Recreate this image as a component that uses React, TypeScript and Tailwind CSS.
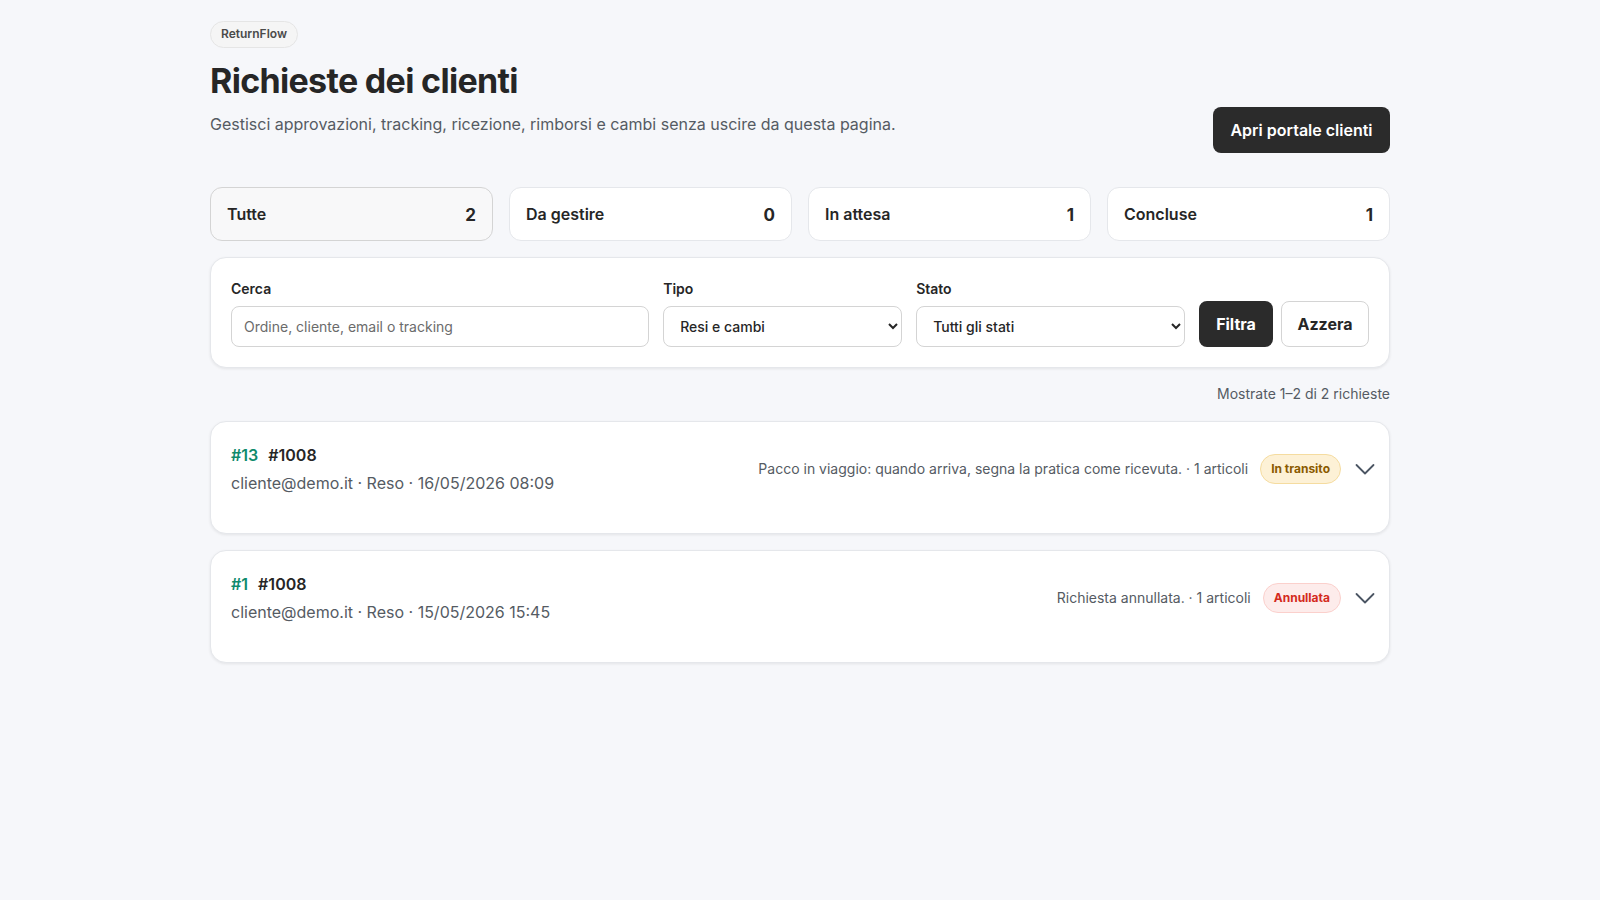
import React from 'react';

const tabs = [
  { id: 'all', label: 'Tutte', count: 2 },
  { id: 'todo', label: 'Da gestire', count: 0 },
  { id: 'waiting', label: 'In attesa', count: 1 },
  { id: 'done', label: 'Concluse', count: 1 },
];

const requests = [
  {
    id: '#13',
    order: '#1008',
    meta: 'cliente@demo.it · Reso · 16/05/2026 08:09',
    note: 'Pacco in viaggio: quando arriva, segna la pratica come ricevuta. · 1 articoli',
    status: 'In transito',
    tone: 'amber',
  },
  {
    id: '#1',
    order: '#1008',
    meta: 'cliente@demo.it · Reso · 15/05/2026 15:45',
    note: 'Richiesta annullata. · 1 articoli',
    status: 'Annullata',
    tone: 'red',
  },
];

function Chevron() {
  return (
    <svg width="20" height="20" viewBox="0 0 20 20" fill="none" className="text-[#4b5563]">
      <path d="M1.5 6L10 14.5L18.5 6" stroke="currentColor" strokeWidth="1.8" strokeLinecap="round" strokeLinejoin="round" />
    </svg>
  );
}

export default function App() {
  return (
    <div className="min-h-screen bg-[#f6f7fa] text-[#262626] font-['Inter','Noto_Sans',sans-serif]">
      <div className="mx-auto w-[1180px] pt-5 pb-16">
        {/* Header */}
        <div className="flex items-start justify-between">
          <div>
            <span className="inline-flex h-[27px] items-center rounded-full border border-[#e5e5e5] bg-[#f5f5f5] px-2.5 text-xs font-semibold text-[#4a4a4a]">
              ReturnFlow
            </span>
            <h1 className="mt-[11px] text-[34px] font-bold leading-[44px] tracking-[-0.02em] text-[#262626]">
              Richieste dei clienti
            </h1>
            <p className="mt-[9px] text-base text-[#555b63]">
              Gestisci approvazioni, tracking, ricezione, rimborsi e cambi senza uscire da questa pagina.
            </p>
          </div>
          <button className="mt-[87px] h-[46px] w-[177px] rounded-lg bg-[#2b2b2b] text-base font-semibold text-white">
            Apri portale clienti
          </button>
        </div>

        {/* Tabs */}
        <div className="mt-[34px] grid grid-cols-4 gap-4">
          {tabs.map((t, i) => (
            <button
              key={t.id}
              className={`flex h-[54px] items-center justify-between rounded-xl border px-4 text-base font-semibold text-[#262626] ${
                i === 0 ? 'border-[#d4d4d4] bg-[#f8f8f9]' : 'border-[#e5e7eb] bg-white'
              }`}
            >
              <span className="leading-none">{t.label}</span>
              <span className="translate-y-[1px] text-[17px] font-bold leading-none">{t.count}</span>
            </button>
          ))}
        </div>

        {/* Filters */}
        <div className="mt-4 rounded-2xl border border-[#e5e7eb] bg-white p-5 shadow-[0_1px_3px_rgba(0,0,0,0.08)]">
          <div className="grid grid-cols-[1.75fr_1fr_1.125fr_auto] items-end gap-3.5">
            <label className="flex flex-col gap-2">
              <span className="translate-y-[1px] text-sm font-semibold text-[#262626]">Cerca</span>
              <input
                placeholder="Ordine, cliente, email o tracking"
                className="h-[41px] rounded-lg border border-[#d4d4d4] bg-white px-3 text-sm text-[#262626] placeholder:text-[#6b6b6b] outline-none"
              />
            </label>
            <label className="flex flex-col gap-2">
              <span className="translate-y-[1px] text-sm font-semibold text-[#262626]">Tipo</span>
              <select className="h-[41px] rounded-lg border border-[#d4d4d4] bg-white px-3 text-sm font-medium text-[#262626] outline-none">
                <option>Resi e cambi</option>
              </select>
            </label>
            <label className="flex flex-col gap-2">
              <span className="translate-y-[1px] text-sm font-semibold text-[#262626]">Stato</span>
              <select className="h-[41px] rounded-lg border border-[#d4d4d4] bg-white px-3 text-sm font-medium text-[#262626] outline-none">
                <option>Tutti gli stati</option>
              </select>
            </label>
            <div className="flex gap-2">
              <button className="h-[46px] w-[74px] rounded-lg bg-[#2b2b2b] text-base font-bold text-white">Filtra</button>
              <button className="h-[46px] w-[88px] rounded-lg border border-[#d4d4d4] bg-white text-base font-bold text-[#262626]">
                Azzera
              </button>
            </div>
          </div>
        </div>

        <p className="mt-4 text-right text-sm text-[#555b63]">Mostrate 1–2 di 2 richieste</p>

        {/* Requests */}
        <div className="mt-[17px] flex flex-col gap-4">
          {requests.map((r) => (
            <div
              key={r.id}
              className="rounded-2xl border border-[#e5e7eb] bg-white pl-5 pr-3.5 pt-[21px] pb-[38px] shadow-[0_1px_3px_rgba(0,0,0,0.08)]"
            >
              <div className="flex items-center justify-between">
                <div>
                  <div className="flex items-center gap-2.5 text-base font-semibold leading-6">
                    <span className="text-[#0f8a6c]">{r.id}</span>
                    <span className="text-[#262626]">{r.order}</span>
                  </div>
                  <p className="mt-1 text-base text-[#555b63]">{r.meta}</p>
                </div>
                <div className="flex items-center">
                  <span className="text-sm text-[#555b63]">{r.note}</span>
                  <span
                    className={`ml-3 inline-flex h-[30px] items-center rounded-full border px-2.5 text-xs font-bold ${
                      r.tone === 'amber'
                        ? 'border-[#f5dca0] bg-[#fdf1d6] text-[#8a5a00]'
                        : 'border-[#fbd0cc] bg-[#fdeceb] text-[#d42a1c]'
                    }`}
                  >
                    {r.status}
                  </span>
                  <span className="ml-3.5 flex">
                    <Chevron />
                  </span>
                </div>
              </div>
            </div>
          ))}
        </div>
      </div>
    </div>
  );
}
